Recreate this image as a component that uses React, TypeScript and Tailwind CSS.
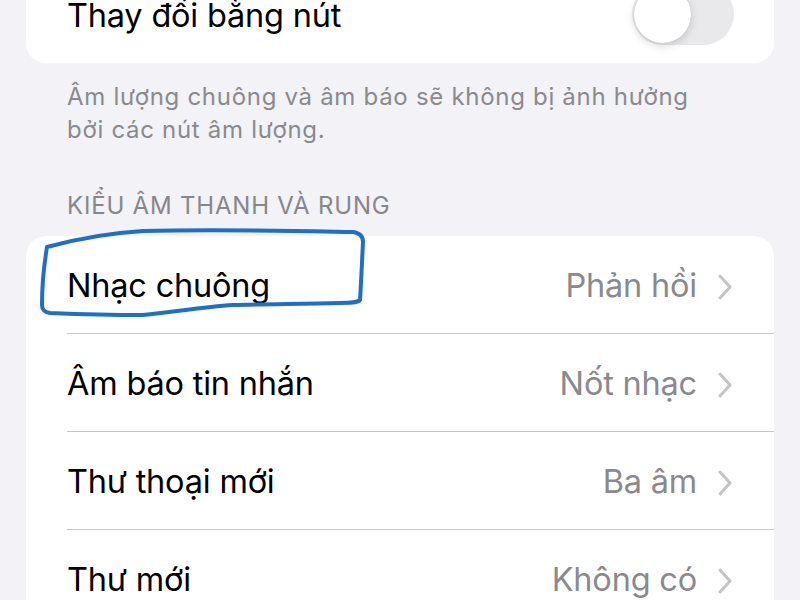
import React from "react";

const Chevron = () => (
  <svg width="16" height="26" viewBox="0 0 16 26" className="shrink-0">
    <path d="M3 2 L13 13 L3 24" fill="none" stroke="#c4c4c7" strokeWidth="3" strokeLinecap="round" strokeLinejoin="round" />
  </svg>
);

const rows = [
  { label: "Nhạc chuông", value: "Phản hồi" },
  { label: "Âm báo tin nhắn", value: "Nốt nhạc" },
  { label: "Thư thoại mới", value: "Ba âm" },
  { label: "Thư mới", value: "Không có" },
];

export default function App() {
  return (
    <div
      className="relative w-[800px] h-[600px] overflow-hidden bg-[#f2f2f7]"
      style={{ fontFamily: "Inter, 'Noto Sans', sans-serif" }}
    >
      <div className="px-[26px]">
        <div className="mt-[-31px] h-[94px] bg-white rounded-[20px] flex items-center justify-between pl-[41px] pr-[40px]">
          <span className="text-[32.5px] tracking-[-0.2px] text-black">Thay đổi bằng nút</span>
          <div className="relative w-[102px] h-[62px] rounded-full bg-[#e9e9eb] mt-[-4px]">
            <div className="absolute left-[2px] top-[2.5px] w-[57px] h-[57px] rounded-full bg-white shadow-[0_3px_8px_rgba(0,0,0,0.15),0_0_1px_rgba(0,0,0,0.16)]" />
          </div>
        </div>
        <p className="mt-[17px] pl-[41px] pr-[30px] text-[24px] leading-[33px] text-[#8a8a8e] tracking-[0.7px]">
          Âm lượng chuông và âm báo sẽ không bị ảnh hưởng
          <br />
          bởi các nút âm lượng.
        </p>
        <div className="mt-[46px] pl-[41px] text-[24px] leading-[28px] text-[#86868b] tracking-[0.8px]">
          KIỂU ÂM THANH VÀ RUNG
        </div>
        <div className="mt-[16px] bg-white rounded-[20px] overflow-hidden">
          {rows.map((r) => (
            <div key={r.label} className="pl-[41px]">
              <div className="h-[98px] pt-[4px] flex items-center justify-between pr-[41px] border-b border-[#c6c6c8]">
                <span className="text-[32.5px] tracking-[-0.2px] text-black">{r.label}</span>
                <div className="flex items-center gap-[20px]">
                  <span className="text-[32.5px] tracking-[-0.2px] text-[#8a8a8e]">{r.value}</span>
                  <Chevron />
                </div>
              </div>
            </div>
          ))}
        </div>
      </div>
      <svg className="absolute left-0 top-0 pointer-events-none" width="800" height="600" viewBox="0 0 800 600">
        <path
          d="M47 247 C80 238 110 233 143 231 C220 229 300 231 353 232 C360 233 363 236 363 242 C362 262 361 285 360 300 C357 303 350 303 340 303 C300 304 260 304 233 305 C200 307 170 313 143 315 C110 315 75 314 50 313 C44 312 42 310 42 305 C42 290 44 265 47 247 Z"
          fill="none"
          stroke="#1f6fc6"
          strokeWidth="4"
          strokeLinecap="round"
          strokeLinejoin="round"
        />
      </svg>
    </div>
  );
}
